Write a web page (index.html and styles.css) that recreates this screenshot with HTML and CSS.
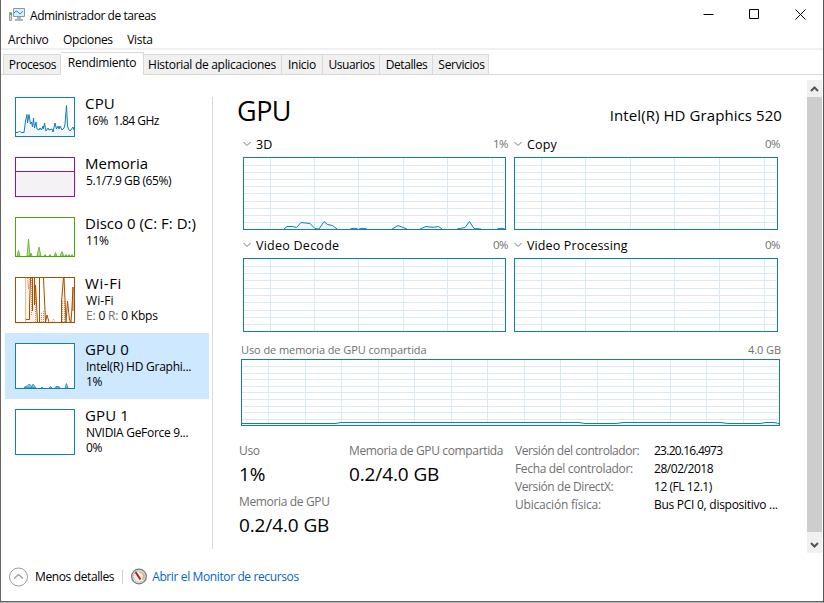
FILE: index.html
```
<!DOCTYPE html>
<html lang="es">

<head>
    <meta charset="UTF-8">
    <meta name="viewport" content="width=device-width, initial-scale=1.0">
    <title>Administrador de tareas</title>
    <link rel="stylesheet" href="styles.css">
</head>

<body>
    <div class="window">
        <header class="titlebar">
            <svg class="appIcon" width="16" height="14" viewBox="0 0 16 14">
                <path d="M0.500 4.500h2v8h-2z" fill="#d5d9dc" stroke="#9aa1a6" />
                <path d="M1 5h2v2H1z" fill="#2fbf4a" />
                <path d="M4.500 0.500h11v8h-11z" fill="#d8f0fa" stroke="#8d979d" />
                <path d="M5 5l2-2 2 1 2 2 3-3" fill="none" stroke="#2495c4" />
                <path d="M8 9h4v2h2v2H6v-2h2z" fill="#aeb5b9" />
            </svg>
            <span class="appName">Administrador de tareas</span>
            <div class="controls">
                <svg width="11" height="11" viewBox="0 0 11 11"><path d="M0.500 5.500h10" /></svg>
                <svg width="11" height="11" viewBox="0 0 11 11"><path d="M0.500 0.500h9v9h-9z" /></svg>
                <svg width="11" height="11" viewBox="0 0 11 11"><path d="M0.500 0.500l10 10M10.500 0.500l-10 10" /></svg>
            </div>
        </header>

        <nav class="menu">
            <span class="archivo">Archivo</span>
            <span class="opciones">Opciones</span>
            <span>Vista</span>
        </nav>

        <div class="tabs">
            <div class="tab procesos">Procesos</div>
            <div class="tab active">Rendimiento</div>
            <div class="tab historial">Historial de aplicaciones</div>
            <div class="tab inicio">Inicio</div>
            <div class="tab usuarios">Usuarios</div>
            <div class="tab detalles">Detalles</div>
            <div class="tab servicios">Servicios</div>
        </div>

        <div class="content">
            <aside class="sidebar">
                <div class="item">
                    <svg class="thumb blue" width="60" height="40" viewBox="0 0 60 40">
                        <path class="area" d="M1 35.500H3L4.500 34L6 35.500H9L10.500 24L12 17.500L12.500 26L14 17.500L15.500 27L16.500 25L17.500 30L18.500 21L19.500 31L21 25L22 32L24 33L25 31L26.500 33L28 29L28.500 32L29.500 26L31 34L33 31L34 33L37 32L38 35L40 26L41.500 32L43 29L44 32L45 29L47 33L49 31L50 27L51.500 8.500L52.500 29L53.500 32L55 34L58 30L59 33V39H1Z" />
                        <path class="line" d="M1 35.500H3L4.500 34L6 35.500H9L10.500 24L12 17.500L12.500 26L14 17.500L15.500 27L16.500 25L17.500 30L18.500 21L19.500 31L21 25L22 32L24 33L25 31L26.500 33L28 29L28.500 32L29.500 26L31 34L33 31L34 33L37 32L38 35L40 26L41.500 32L43 29L44 32L45 29L47 33L49 31L50 27L51.500 8.500L52.500 29L53.500 32L55 34L58 30L59 33" />
                        <rect class="frame" x="0.500" y="0.500" width="59" height="39" />
                    </svg>
                    <div class="info">
                        <h2 class="cpu">CPU</h2>
                        <p class="cpuUse">16%&nbsp; 1.84 GHz</p>
                    </div>
                </div>
                <div class="item">
                    <svg class="thumb purple" width="60" height="40" viewBox="0 0 60 40">
                        <path class="area" d="M1 14H59V39H1Z" />
                        <path class="line" d="M1 14.500H59" />
                        <rect class="frame" x="0.500" y="0.500" width="59" height="39" />
                    </svg>
                    <div class="info">
                        <h2 class="memoria">Memoria</h2>
                        <p class="memUse">5.1/7.9 GB (65%)</p>
                    </div>
                </div>
                <div class="item">
                    <svg class="thumb green" width="60" height="40" viewBox="0 0 60 40">
                        <path class="line filled" d="M2 39L3.500 33.500L5 39ZM12 39L13.500 22L15 39ZM15 39L16 36L17 39ZM22 39L24 30L26 39ZM29 39L30 37.500L31 39ZM34 39L35 37.500L36 39ZM39 39L40.500 35.500L42 39ZM45 39L47 34.500L49 39ZM50 39L51 37.500L52 39ZM53 39L54 37.500L55 39ZM56 39L57 37.500L58 39Z" />
                        <rect class="frame" x="0.500" y="0.500" width="59" height="39" />
                    </svg>
                    <div class="info">
                        <h2 class="disco">Disco 0 (C: F: D:)</h2>
                        <p class="percent">11%</p>
                    </div>
                </div>
                <div class="item">
                    <svg class="thumb brown" width="60" height="46" viewBox="0 0 60 46">
                        <path class="area" d="M11 1H22V45H11ZM24 45L26 35H30L31 45ZM46 1H49L52 45H46Z" />
                        <path class="receive" d="M12.500 1L13.500 12L14.500 1M16.500 1V38M20.500 20V45M26.500 36V45M28.500 34V45M47.500 24V45M49.500 24V45M37 45L38.500 42L40 45M55 45V40" />
                        <path class="pale" d="M10.500 1V45" />
                        <path class="line" d="M11 42.500H14.500V30L15.500 1M17.500 1V34M19.500 1V28L20.500 8L22.500 45M24.500 45V1M28.500 1L30.500 45L32 38L34 45M46.500 45V25L48.500 1M49 1L51 45L52.500 24L54.500 43L56 45L57 30L58 10V34" />
                        <rect class="frame" x="0.500" y="0.500" width="59" height="45" />
                    </svg>
                    <div class="info">
                        <h2 class="wifi">Wi-Fi</h2>
                        <p class="wifiName">Wi-Fi</p>
                        <p class="wifiUse"><span class="muted">E:</span> 0 <span class="muted">R:</span> 0 Kbps</p>
                    </div>
                </div>
                <div class="item selected">
                    <svg class="thumb blue" width="60" height="46" viewBox="0 0 60 46">
                        <path class="line filled" d="M9 44.500L11 43L12 43.500L14 41L16 42.500L16.500 44.500L18 41L20 43.500L21 44.500ZM26 45L27 44L28 45ZM34 45L35.500 43.500L37 45ZM40 45L41 43.500H44L45 45ZM50 44.500L51.500 40.500L53 44.500Z" />
                        <rect class="frame" x="0.500" y="0.500" width="59" height="45" />
                    </svg>
                    <div class="info">
                        <h2 class="gpu">GPU 0</h2>
                        <p class="intel">Intel(R) HD Graphi...</p>
                        <p class="percent">1%</p>
                    </div>
                </div>
                <div class="item">
                    <svg class="thumb blue" width="60" height="46" viewBox="0 0 60 46">
                        <rect class="frame" x="0.500" y="0.500" width="59" height="45" />
                    </svg>
                    <div class="info">
                        <h2 class="gpu">GPU 1</h2>
                        <p class="nvidia">NVIDIA GeForce 9...</p>
                        <p class="percent">0%</p>
                    </div>
                </div>
            </aside>

            <main class="panel">
                <div class="heading">
                    <h1>GPU</h1>
                    <span class="device">Intel(R) HD Graphics 520</span>
                </div>

                <div class="engines">
                    <section class="engine">
                        <div class="caption">
                            <svg class="chevron" width="8" height="6" viewBox="0 0 8 6"><path d="M0.500 1L4 4.500L7.500 1" /></svg>
                            <span class="name three">3D</span>
                            <span class="value">1%</span>
                        </div>
                        <svg class="graph blue" width="263" height="73" viewBox="0 0 263 73">
                            <path class="grid" d="M27.500 1v71M71.500 1v71M115.500 1v71M160.500 1v71M204.500 1v71M249.500 1v71M1 8.500h260M1 15.500h260M1 22.500h260M1 29.500h260M1 36.500h260M1 44.500h260M1 51.500h260M1 58.500h260M1 65.500h260" />
                            <path class="area" d="M41 72L44 69.500H49.500L53.500 70.500L58 65.500L67 66.500L72 71.500L76 72L81 64.500L84.500 67.500L89.500 68.500L94 72ZM149 72L155 68.500L164 72ZM177 72L183 69.500L190 70.300L195.500 69.500L199 72ZM217 71.500L222 70.500L226.500 64.500L231 71.500Z" />
                            <path class="line" d="M41 72L44 69.500H49.500L53.500 70.500L58 65.500L67 66.500L72 71.500L76 72L81 64.500L84.500 67.500L89.500 68.500L94 72M107 72L111 71.300L115 72M116 72L120 71.300L124 72M149 72L155 68.500L164 72M177 72L183 69.500L190 70.300L195.500 69.500L199 72M214 72L222 70.500L226.500 64.500L231 71.500L238 72M254 72L258 71.300L262 72" />
                            <rect class="frame" x="0.500" y="0.500" width="262" height="72" />
                        </svg>
                    </section>
                    <section class="engine">
                        <div class="caption">
                            <svg class="chevron" width="8" height="6" viewBox="0 0 8 6"><path d="M0.500 1L4 4.500L7.500 1" /></svg>
                            <span class="name copy">Copy</span>
                            <span class="value">0%</span>
                        </div>
                        <svg class="graph blue" width="264" height="73" viewBox="0 0 264 73">
                            <path class="grid" d="M27.500 1v71M71.500 1v71M116.500 1v71M160.500 1v71M205.500 1v71M250.500 1v71M1 8.500h261M1 15.500h261M1 22.500h261M1 29.500h261M1 36.500h261M1 44.500h261M1 51.500h261M1 58.500h261M1 65.500h261" />
                            <rect class="frame" x="0.500" y="0.500" width="263" height="72" />
                        </svg>
                    </section>
                    <section class="engine">
                        <div class="caption">
                            <svg class="chevron" width="8" height="6" viewBox="0 0 8 6"><path d="M0.500 1L4 4.500L7.500 1" /></svg>
                            <span class="name decode">Video Decode</span>
                            <span class="value">0%</span>
                        </div>
                        <svg class="graph blue" width="263" height="74" viewBox="0 0 263 74">
                            <path class="grid" d="M27.500 1v72M71.500 1v72M115.500 1v72M160.500 1v72M204.500 1v72M249.500 1v72M1 8.500h260M1 15.500h260M1 22.500h260M1 30.500h260M1 37.500h260M1 44.500h260M1 52.500h260M1 59.500h260M1 66.500h260" />
                            <rect class="frame" x="0.500" y="0.500" width="262" height="73" />
                        </svg>
                    </section>
                    <section class="engine">
                        <div class="caption">
                            <svg class="chevron" width="8" height="6" viewBox="0 0 8 6"><path d="M0.500 1L4 4.500L7.500 1" /></svg>
                            <span class="name processing">Video Processing</span>
                            <span class="value">0%</span>
                        </div>
                        <svg class="graph blue" width="264" height="74" viewBox="0 0 264 74">
                            <path class="grid" d="M27.500 1v72M71.500 1v72M116.500 1v72M160.500 1v72M205.500 1v72M250.500 1v72M1 8.500h261M1 15.500h261M1 22.500h261M1 30.500h261M1 37.500h261M1 44.500h261M1 52.500h261M1 59.500h261M1 66.500h261" />
                            <rect class="frame" x="0.500" y="0.500" width="263" height="73" />
                        </svg>
                    </section>
                </div>

                <section class="memory">
                    <div class="memoryCaption">
                        <span class="memoryName">Uso de memoria de GPU compartida</span>
                        <span class="memoryMax">4.0 GB</span>
                    </div>
                    <svg class="graph blue" width="539" height="67" viewBox="0 0 539 67">
                        <path class="grid" d="M27.500 1v65M64.500 1v65M100.500 1v65M137.500 1v65M173.500 1v65M210.500 1v65M246.500 1v65M283.500 1v65M319.500 1v65M356.500 1v65M392.500 1v65M429.500 1v65M465.500 1v65M502.500 1v65M1 7.500h536M1 14.500h536M1 20.500h536M1 27.500h536M1 33.500h536M1 40.500h536M1 47.500h536M1 53.500h536M1 60.500h536" />
                        <path class="area" d="M1 64.500H94L100 63.500H338L344 64.500H375L382 63.500H480L487 64.500H519L525 63.500H533L538 64.500V66H1Z" />
                        <path class="line" d="M1 64.500H94L100 63.500H338L344 64.500H375L382 63.500H480L487 64.500H519L525 63.500H533L538 64.500" />
                        <rect class="frame" x="0.500" y="0.500" width="538" height="66" />
                    </svg>
                </section>

                <div class="stats">
                    <div class="stat use">
                        <span class="label">Uso</span>
                        <span class="number">1%</span>
                        <span class="label">Memoria de GPU</span>
                        <span class="number">0.2/4.0 GB</span>
                    </div>
                    <div class="stat shared">
                        <span class="label">Memoria de GPU compartida</span>
                        <span class="number">0.2/4.0 GB</span>
                    </div>
                    <dl class="details">
                        <dt class="driver">Versión del controlador:</dt>
                        <dd class="version">23.20.16.4973</dd>
                        <dt>Fecha del controlador:</dt>
                        <dd class="date">28/02/2018</dd>
                        <dt class="directx">Versión de DirectX:</dt>
                        <dd class="date">12 (FL 12.1)</dd>
                        <dt class="location">Ubicación física:</dt>
                        <dd class="bus">Bus PCI 0, dispositivo ...</dd>
                    </dl>
                </div>
            </main>

            <div class="scrollbar">
                <svg width="9" height="6" viewBox="0 0 9 6"><path d="M1 5L4.500 1.500L8 5" /></svg>
                <div class="scrollThumb"></div>
                <svg width="9" height="6" viewBox="0 0 9 6"><path d="M1 1L4.500 4.500L8 1" /></svg>
            </div>
        </div>

        <footer class="footer">
            <svg width="20" height="20" viewBox="0 0 20 20" fill="none">
                <circle cx="10.500" cy="10" r="9" stroke="#999" />
                <path d="M6 11.500L10.500 7.500L15 11.500" stroke="#999" stroke-width="1.300" />
            </svg>
            <span class="less">Menos detalles</span>
            <div class="separator"></div>
            <svg class="gauge" width="17" height="17" viewBox="0 0 17 17">
                <circle cx="8" cy="8.500" r="7.300" fill="#f1f1ee" stroke="#777" stroke-width="1.300" />
                <circle cx="8" cy="8.500" r="5.700" fill="none" stroke="#c2c2bd" />
                <path d="M8.500 4A4.500 4.500 0 0 1 11.500 11.500" fill="none" stroke="#e9a15c" stroke-width="1.200" />
                <path d="M4.500 4L9.500 11.500" stroke="#c8141d" stroke-width="2" />
            </svg>
            <a class="monitor">Abrir el Monitor de recursos</a>
        </footer>
    </div>
</body>

</html>
```
FILE: styles.css
```
* {
    margin: 0px;
    padding: 0px;
    box-sizing: border-box;
}

body {
    font-family: "Open Sans", "Noto Sans", sans-serif;
    font-size: 12px;
    color: black;
    overflow: hidden;
}

svg {
    display: block;
    flex-shrink: 0;
}

span,
p,
h1,
h2,
a {
    white-space: nowrap;
}

.window {
    width: 824px;
    height: 603px;
    background-color: white;
    border-left: 1px solid #666;
    border-right: 1px solid #555;
    border-bottom: 1px solid #b5b5b5;
    display: flex;
    flex-direction: column;
}

.titlebar {
    height: 30px;
    display: flex;
    align-items: center;
    padding-left: 8px;
}

.appName {
    margin-left: 5px;
    letter-spacing: -0.43px;
}

.controls {
    display: flex;
    gap: 35px;
    margin-left: auto;
    margin-right: 17px;
    margin-bottom: 2px;
}

.controls path {
    fill: none;
    stroke: black;
    stroke-width: 1;
}

.menu {
    height: 20px;
    display: flex;
    align-items: center;
    gap: 14.5px;
    padding-left: 7px;
    border-bottom: 2px solid #f0f0f0;
}

.menu span {
    letter-spacing: -0.3px;
}

.menu .archivo {
    letter-spacing: -0.2px;
}

.menu .opciones {
    letter-spacing: -0.35px;
}

.tabs {
    height: 25px;
    display: flex;
    align-items: flex-end;
    padding-left: 2px;
    border-bottom: 1px solid #d9d9d9;
}

.tab {
    height: 20px;
    line-height: 20px;
    background-color: #f0f0f0;
    border: 1px solid #d9d9d9;
    border-bottom: none;
    border-left: none;
    text-align: center;
    white-space: nowrap;
    letter-spacing: -0.3px;
}

.procesos {
    width: 58px;
    border-left: 1px solid #d9d9d9;
    padding-left: 1px;
    letter-spacing: -0.4px;
}

.active {
    width: 83px;
    height: 23px;
    margin-bottom: -1px;
    background-color: white;
}

.historial {
    width: 138px;
    padding-right: 1px;
    letter-spacing: -0.3px;
}

.inicio {
    width: 41px;
}

.usuarios {
    width: 57px;
    padding-left: 1px;
    letter-spacing: -0.4px;
}

.detalles {
    width: 53px;
    padding-left: 1px;
    letter-spacing: -0.4px;
}

.servicios {
    width: 56px;
    padding-left: 2px;
}

.content {
    height: 478px;
    padding-top: 5px;
    display: flex;
}

.sidebar {
    width: 208px;
    padding: 7px 0px 0px 4px;
}

.item {
    display: flex;
    padding: 10px;
    gap: 11px;
}

.selected {
    background-color: #cde8ff;
}

.info {
    margin-top: -4px;
    height: 36px;
}

.info h2 {
    font-size: 15px;
    font-weight: normal;
    line-height: 20px;
    margin-left: -1px;
}

.info .wifi {
    letter-spacing: 0.6px;
}

.info .cpu {
    letter-spacing: 0.2px;
}

.info .gpu {
    letter-spacing: 0.15px;
}

.info p {
    line-height: 15px;
    letter-spacing: -0.55px;
}

.info .memUse {
    letter-spacing: -0.4px;
}

.info .percent {
    letter-spacing: -0.35px;
}

.info .intel {
    letter-spacing: -0.25px;
}

.info .nvidia {
    letter-spacing: -0.3px;
}

.info .wifiUse {
    letter-spacing: -0.18px;
}

.info .wifiName {
    letter-spacing: 0.1px;
}

.thumb {
    background-color: white;
}

.line {
    fill: none;
    stroke-width: 1;
}

.frame {
    fill: none;
}

.blue .frame,
.blue .line {
    stroke: #117dbb;
}

.blue .area {
    fill: #f1f6fa;
}

.purple .frame,
.purple .line {
    stroke: #8b12ae;
}

.purple .area {
    fill: #f4f2f4;
}

.green .frame,
.green .line {
    stroke: #4da60c;
}

.green .filled {
    fill: #b8dba0;
    stroke-width: 0.7;
}

.brown .frame,
.brown .line {
    stroke: #a74f01;
}

.brown .area {
    fill: #fcf3eb;
}

.receive {
    fill: none;
    stroke: #dc8b67;
    stroke-dasharray: 1 1;
}

.pale {
    fill: none;
    stroke: #f0b9a0;
}

.selected .filled {
    fill: #8fc2df;
    stroke-width: 0.7;
}

.muted {
    color: #707070;
}

/* right side */
.panel {
    width: 595px;
    margin-top: 17px;
    height: 452px;
    margin-left: 3px;
    border-left: 1px solid #d9d9d9;
    padding-left: 24px;
}

.heading {
    height: 39px;
    display: flex;
    justify-content: space-between;
    padding-right: 25px;
}

.heading h1 {
    font-size: 27px;
    font-weight: normal;
    line-height: 27px;
    letter-spacing: -0.5px;
}

.device {
    font-size: 15px;
    line-height: 37px;
    letter-spacing: 0.08px;
}

.engines {
    display: grid;
    grid-template-columns: 263px 264px;
    column-gap: 8px;
    margin-left: 6px;
}

.caption {
    display: flex;
    align-items: center;
    height: 21px;
    line-height: 17px;
    padding-bottom: 4px;
    margin-right: -2px;
}

.engine:nth-child(n+3) .caption {
    height: 28px;
    padding-top: 7px;
}

.chevron {
    margin-bottom: 2px;
}

.chevron path {
    fill: none;
    stroke: #777;
}

.name {
    margin-left: 5px;
    font-size: 12.5px;
    letter-spacing: 0.12px;
}

.decode {
    letter-spacing: 0.25px;
}

.value {
    margin-left: auto;
    color: #707070;
    font-size: 11.5px;
    line-height: 15px;
    margin-bottom: 2px;
    letter-spacing: -0.5px;
}

.grid {
    fill: none;
    stroke: #d9eaf4;
}

.memory {
    margin-left: 4px;
    width: 540px;
}

.memoryCaption {
    display: flex;
    justify-content: space-between;
    height: 27px;
    padding-top: 9px;
    line-height: 17px;
    font-size: 11px;
    letter-spacing: -0.08px;
    color: #707070;
}

.stats {
    display: flex;
    padding: 16px 0px 0px 2px;
}

.stat {
    display: flex;
    flex-direction: column;
}

.use {
    width: 110px;
}

.shared {
    width: 166px;
}

.label {
    line-height: 18px;
    color: #707070;
    letter-spacing: -0.35px;
}

.number {
    font-size: 19px;
    line-height: 29px;
    margin-bottom: 4px;
    letter-spacing: -0.12px;
}

.details {
    display: grid;
    grid-template-columns: 139px 140px;
    grid-auto-rows: 18px;
    line-height: 18px;
    white-space: nowrap;
    letter-spacing: -0.33px;
}

.details dt {
    color: #707070;
}

.driver {
    letter-spacing: -0.43px;
}

.directx {
    letter-spacing: -0.4px;
}

.location {
    letter-spacing: -0.2px;
}

.version {
    letter-spacing: -0.75px;
}

.date {
    letter-spacing: -0.45px;
}

.bus {
    letter-spacing: -0.27px;
}

.scrollbar {
    width: 15px;
    height: 473px;
    background-color: #f0f0f0;
    display: flex;
    flex-direction: column;
    align-items: center;
    justify-content: space-between;
    padding: 6px 0px 5px;
}

.scrollbar path {
    fill: none;
    stroke: #555;
    stroke-width: 2;
}

.scrollThumb {
    width: 15px;
    height: 435px;
    background-color: #cdcdcd;
    margin-bottom: 5px;
}

.footer {
    height: 49px;
    display: flex;
    align-items: center;
    padding-left: 7px;
    padding-bottom: 1px;
    border-bottom: 1px solid #666;
}

.less {
    margin-left: 7px;
    letter-spacing: -0.38px;
}

.separator {
    width: 1px;
    height: 14px;
    margin-left: 8px;
    background-color: #d0d0d0;
}

.gauge {
    margin-left: 8px;
}

.monitor {
    margin-left: 4px;
    color: #0066cc;
    letter-spacing: -0.38px;
}
```
